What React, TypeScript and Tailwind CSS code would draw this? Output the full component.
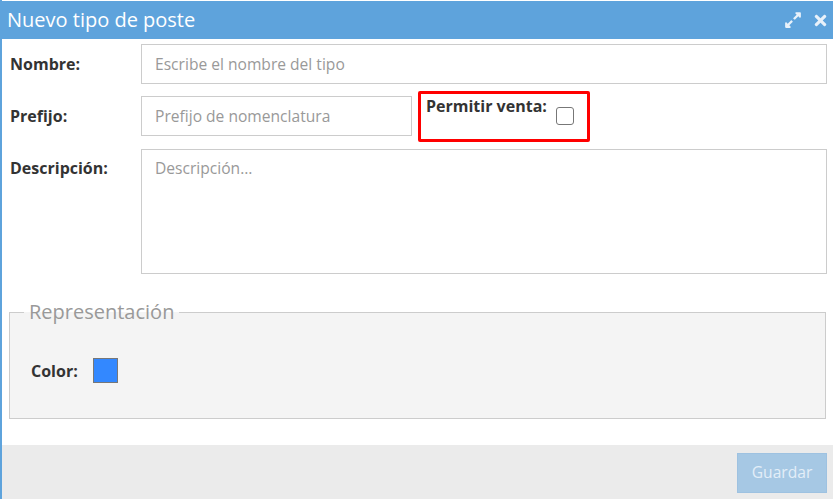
import { FaExpandAlt, FaTimes } from "react-icons/fa"

const labelClass = "w-[139px] shrink-0 pl-[8px] text-[16px] font-bold text-[#333]"
const inputClass =
	"h-[40px] border border-[#ccc] bg-white px-[13px] text-[15.6px] text-[#555] outline-none placeholder:text-[#999]"

export default function App() {
	return (
		<div
			className="flex h-[499px] w-[833px] flex-col border-l-2 border-[#5ea3dc] bg-white pt-px"
			style={{ fontFamily: '"Open Sans", "Noto Sans", sans-serif' }}
		>
			{/* title bar */}
			<div className="flex h-[38px] shrink-0 items-center justify-between bg-[#5ea3dc] pl-[5px] pr-[5px]">
				<h1 className="text-[20px] leading-none text-white">Nuevo tipo de poste</h1>
				<div className="flex items-center gap-[11px] text-[#e8f1fa]">
					<FaExpandAlt className="h-[18px] w-[18px]" />
					<FaTimes className="h-[17px] w-[15px]" />
				</div>
			</div>

			<div className="flex flex-1 flex-col pt-[5px]">
				<div className="flex items-center">
					<label className={labelClass}>Nombre:</label>
					<input className={`${inputClass} w-[686px]`} placeholder="Escribe el nombre del tipo" />
				</div>

				<div className="mt-[12px] flex items-start">
					<label className={`${labelClass} pt-[8px]`}>Prefijo:</label>
					<input className={`${inputClass} w-[271px]`} placeholder="Prefijo de nomenclatura" />
					{/* highlighted checkbox box overlaps the row a little above and below */}
					<div className="-mb-[6px] -mt-[5px] ml-[6px] flex h-[51px] w-[172px] items-start gap-[9px] rounded-[2px] border-[3px] border-[#ff0000] pl-[5px]">
						<span className="text-[16px] font-bold text-[#333]">Permitir venta:</span>
						<span className="mt-[13px] h-[18px] w-[18px] rounded-[3px] border border-[#777] bg-white" />
					</div>
				</div>

				<div className="mt-[13px] flex items-start">
					<label className={`${labelClass} pt-[7px]`}>Descripción:</label>
					<textarea
						className={`${inputClass} h-[125px] w-[686px] resize-none pt-[7px]`}
						placeholder="Descripción…"
					/>
				</div>

				<fieldset className="mx-[7px] mt-[27px] h-[118px] border border-[#ccc] bg-[#f4f4f4] px-[21px]">
					<legend className="ml-[-7px] px-[5px] text-[20px] leading-[22px] text-[#999]">Representación</legend>
					<div className="mt-[35px] flex items-center">
						<span className="w-[62px] text-[16px] font-bold text-[#333]">Color:</span>
						<span className="h-[25px] w-[25px] border border-[#777] bg-[#3388ff]" />
					</div>
				</fieldset>

				<div className="mt-auto flex h-[54px] items-start justify-end bg-[#ebebeb] pr-[6px] pt-[8px]">
					<button className="h-[40px] w-[90px] border border-[#9ec2e1] bg-[#a6c8e4] text-[15.6px] text-[#e3eef8]">
						Guardar
					</button>
				</div>
			</div>
		</div>
	)
}
